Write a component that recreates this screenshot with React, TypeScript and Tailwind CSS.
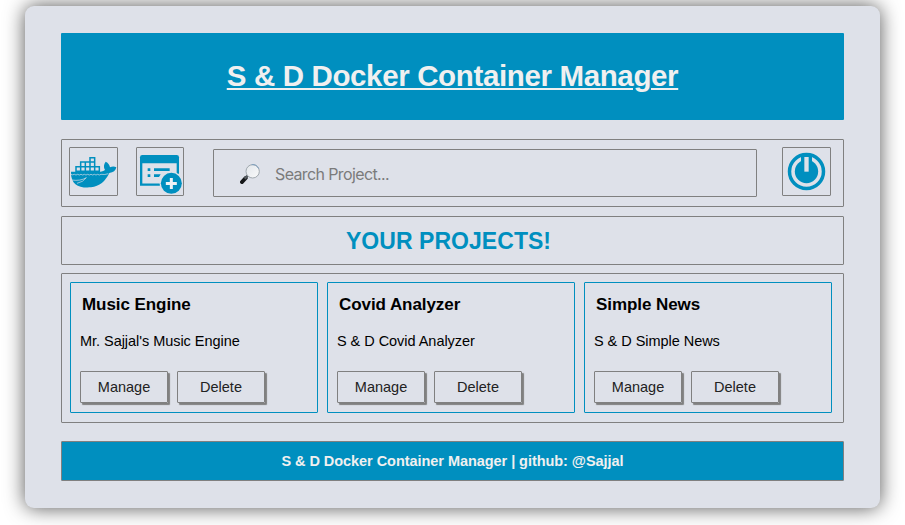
const projects = [
  { name: "Music Engine", description: "Mr. Sajjal's Music Engine" },
  { name: "Covid Analyzer", description: "S & D Covid Analyzer" },
  { name: "Simple News", description: "S & D Simple News" },
];

function DockerIcon() {
  return (
    <svg viewBox="30 39 141 141" className="size-full" fill="#008fbf">
      <path d="M33 110H122q9-1 13-5c-5-9-4-17 2-25c8 4 12 10 13 17c7-3 13-3 19 0c-2 10-9 16-21 17c-12 25-29 40-55 43c-36 3-60-8-60-44Z" />
      <path d="M48 95h14v14H48ZM62 95h14v14H62ZM76 95h14v14H76ZM90 95h14v14H90ZM104 95h14v14h-14ZM62 81h14v14H62ZM76 81h14v14H76ZM90 81h14v14H90ZM90 68h14v13H90Z" fill="none" stroke="#008fbf" strokeWidth="4.5" />
      <path d="M33 118q5 3 10 0q5 4 10 0q5 4 10 0q5 4 10 0q5 4 10 0q5 4 10 0q5 4 10 0q5 4 10 0q5 4 10 0q12 2 22-2" fill="none" stroke="#dee1e9" strokeWidth="2" />
      <path d="M35 135q26 4 44-7q-9 13-28 17" fill="none" stroke="#dee1e9" strokeWidth="2" />
    </svg>
  );
}

function AddProjectIcon() {
  return (
    <svg viewBox="231 39 138 141" className="size-full" fill="#008fbf">
      <path d="M247 60h103q7 0 7 7v18H240V67q0-7 7-7Z" />
      <path d="M243.500 84v65h61M353.500 84v32" fill="none" stroke="#008fbf" strokeWidth="7" />
      <path d="M263 100h8v8h-8ZM282 100h47v8h-47ZM263 118h8v8h-8ZM282 118h20l-5 8h-15Z" />
      <circle cx="334" cy="145" r="35" fill="#dee1e9" />
      <circle cx="334" cy="145" r="31.5" />
      <path d="M334 129v33M317.500 145.500h33" stroke="#eef2f6" strokeWidth="9" />
    </svg>
  );
}

function PowerIcon() {
  return (
    <svg viewBox="129 39 141 141" className="size-full" fill="#008fbf">
      <circle cx="199.500" cy="109.500" r="51" fill="none" stroke="#008fbf" strokeWidth="10.5" />
      <circle cx="199.500" cy="109.500" r="35" />
      <path d="M183 60h33v28h-33Z" />
      <path d="M193 66h13v44h-13Z" fill="#dee1e9" />
    </svg>
  );
}

function SearchIcon() {
  return (
    <svg viewBox="120 87 60 60" className="h-5 w-5">
      <defs>
        <linearGradient id="lens" x1="0" y1="0" x2="1" y2="1">
          <stop offset="0" stopColor="#e2e6eb" />
          <stop offset="1" stopColor="#fafafa" />
        </linearGradient>
      </defs>
      <path d="m126 141 11-12" stroke="#151719" strokeWidth="12" strokeLinecap="round" />
      <path d="m134 131 9-9" stroke="#555b60" strokeWidth="7" />
      <circle cx="158" cy="109" r="20" fill="url(#lens)" stroke="#a0a8ae" strokeWidth="3" />
      <path d="M155 89a20 20 0 0 1 21 12" fill="none" stroke="#7d9ebe" strokeWidth="3" />
    </svg>
  );
}

function ActionButton({ label }: { label: string }) {
  return (
    <button className="h-8 w-22 rounded-[1px] border border-[#808080] text-[14.5px] leading-5 text-[#222] shadow-[2px_2px_1px_#808080]">
      {label}
    </button>
  );
}

export default function App() {
  return (
    <div className="h-[525px] w-[905px] overflow-hidden bg-white pt-1.5 pl-[25px] font-['Liberation_Sans',Arial,sans-serif] text-black">
      <main className="h-[502px] w-[855px] rounded-[9px] bg-[#dee1e9] px-9 pt-[27px] shadow-[0_0_20px_#555]">
        <header className="flex h-[87px] w-[783px] items-center justify-center rounded-[1px] bg-[#008fbf]">
          <h1 className="text-[29.500px] font-bold tracking-[-0.36px] whitespace-nowrap text-[#f0f0f0] underline decoration-2 underline-offset-2">
            S &amp; D Docker Container Manager
          </h1>
        </header>

        <nav className="mt-[19px] flex h-[68px] rounded-[1px] border border-[#808080] pt-[7px] pl-[7px]">
          <button className="h-[49px] w-[49px] rounded-[1px] border border-[#808080]">
            <DockerIcon />
          </button>
          <button className="ml-[18px] h-[49px] w-12 rounded-[1px] border border-[#808080]">
            <AddProjectIcon />
          </button>
          <label className="mt-0.5 ml-[29px] flex h-12 w-[544px] items-center rounded-[1px] border border-[#808080] pt-0.5 pl-[26px]">
            <SearchIcon />
            <input
              className="ml-[15px] w-80 bg-transparent font-[Inter,sans-serif] text-base tracking-[-0.62px] outline-none placeholder:text-[#7b7b7b]"
              placeholder="Search Project..."
            />
          </label>
          <button className="ml-[25px] h-[49px] w-[49px] rounded-[1px] border border-[#808080]">
            <PowerIcon />
          </button>
        </nav>

        <section className="mt-[9px] flex h-[49px] items-center justify-center rounded-[1px] border border-[#808080] pt-0.5 pr-2">
          <h2 className="text-[23px] font-bold tracking-[0.05px] whitespace-nowrap text-[#008fbf]">YOUR PROJECTS!</h2>
        </section>

        <section className="mt-2 flex h-[150px] gap-[9px] rounded-[1px] border border-[#808080] pt-2 pl-2">
          {projects.map((project) => (
            <article key={project.name} className="h-[131px] w-[248px] rounded-[1px] border border-[#008fbf] pt-3 pl-[9px]">
              <h3 className="pl-0.5 text-[17px] leading-5 font-bold tracking-[-0.07px] whitespace-nowrap">{project.name}</h3>
              <p className="mt-4 text-[14.500px] leading-5 tracking-[-0.04px] whitespace-nowrap">{project.description}</p>
              <div className="mt-5 flex gap-[9px]">
                <ActionButton label="Manage" />
                <ActionButton label="Delete" />
              </div>
            </article>
          ))}
        </section>

        <footer className="mt-[18px] flex h-10 items-center justify-center rounded-[1px] border border-[#808080] bg-[#008fbf] pt-0.5 text-[14.500px] font-bold tracking-[-0.05px] whitespace-nowrap text-[#f0f0f0]">
          S &amp; D Docker Container Manager | github: @Sajjal
        </footer>
      </main>
    </div>
  );
}
